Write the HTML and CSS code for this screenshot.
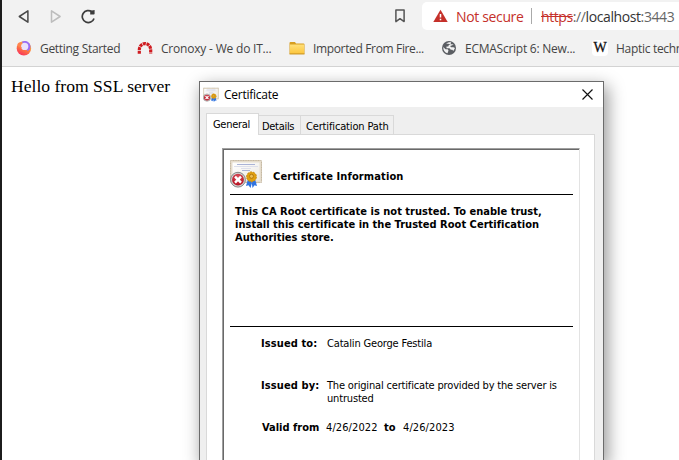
FILE: index.html
```
<!DOCTYPE html>
<html lang="en">
<head>
<meta charset="utf-8">
<title>localhost:3443</title>
<link rel="stylesheet" href="styles.css">
</head>
<body>
<svg width="0" height="0" class="defs" aria-hidden="true">
  <defs>
    <linearGradient id="flame" x1="0.8" y1="0" x2="0.3" y2="1"><stop offset="0" stop-color="#ffd43c"/><stop offset=".45" stop-color="#ff8a3a"/><stop offset="1" stop-color="#f8305f"/></linearGradient>
    <linearGradient id="gold" x1="0" y1="0" x2="0" y2="1"><stop offset="0" stop-color="#ffe07a"/><stop offset="1" stop-color="#fcc63e"/></linearGradient>
    <linearGradient id="paper" x1="0" y1="0" x2="1" y2="1"><stop offset="0" stop-color="#fff"/><stop offset="1" stop-color="#ece9e3"/></linearGradient>
    <radialGradient id="red" cx=".5" cy=".3" r=".7"><stop offset="0" stop-color="#dc5560"/><stop offset="1" stop-color="#b30d1d"/></radialGradient>
    <symbol id="cert" viewBox="0 0 32 28">
      <rect x=".5" y=".5" width="31" height="22" rx="1" fill="#e6ddcd" stroke="#d3c8b5"/>
      <rect x="2.5" y="2.5" width="27" height="18" fill="url(#paper)"/>
      <path d="M.5.5h31v22H.5z" fill="none" stroke="#b9ab92" stroke-dasharray="1 1.5" opacity=".6"/>
      <path d="M7 4.500h18M12 10.500h8" stroke="#aab3d6" stroke-width="1"/>
      <path d="M4 6.500h24M11 8.500h10" stroke="#dddfeb" stroke-width="1"/>
      <path d="M18 19l-2 7 2.500-.7L20.500 28l2-7zM25 19l2 7-2.500-.7L22.500 28l-1-7z" fill="#2f73e0"/>
      <circle cx="21.500" cy="16.800" r="4.900" fill="#e0a010" stroke="#c98a0c" stroke-width="1" stroke-dasharray="2 1"/>
      <circle cx="21.500" cy="16.300" r="2" fill="#edc052" stroke="#a86b05" stroke-width=".8"/>
      <circle cx="8" cy="19.700" r="7.400" fill="#d3d3d3" stroke="#868686" stroke-width="1"/>
      <circle cx="8" cy="19.700" r="5.900" fill="url(#red)"/>
      <path d="M5 16.700l6 6M11 16.700l-6 6" stroke="#fff" stroke-width="2.400"/>
    </symbol>
  </defs>
</svg>
<div class="browser">
  <div class="toolbar">
    <svg class="nav back" width="12" height="15" viewBox="0 0 12 15"><path d="M9.900 1.800v11.400L1.300 7.500z" fill="none" stroke="#484848" stroke-width="1.500" stroke-linejoin="round"/></svg>
    <svg class="nav forward" width="12" height="15" viewBox="0 0 12 15"><path d="M1.500 1.800v11.400L10.100 7.500z" fill="none" stroke="#bdbdbd" stroke-width="1.500" stroke-linejoin="round"/></svg>
    <svg class="nav reload" width="15" height="15" viewBox="0 0 15 15"><path d="M13 9.400A6 6 0 1 1 11 2.900" fill="none" stroke="#3c3c3c" stroke-width="1.700"/><path d="M9.200 1.800L13.600 1v3.800q0 .8-.8.800H9.200z" fill="#3c3c3c"/></svg>
    <svg class="bookmark" width="10" height="14" viewBox="0 0 10 14"><path d="M.9.900h8.200v11.700L5 9.700.9 12.600z" fill="none" stroke="#555" stroke-width="1.500" stroke-linejoin="round"/></svg>
    <div class="address">
      <svg class="warning" width="15" height="14" viewBox="0 0 15 14"><path d="M7.500.7L14.700 13H.3z" fill="#c5302a"/><path d="M7.500 5v3.600M7.500 9.700v1.600" stroke="#fff" stroke-width="1.500"/></svg>
      <span class="insecure">Not secure</span>
      <span class="divider"></span>
      <span class="url"><s>https</s><i>://</i>localhost<i>:3443</i></span>
    </div>
  </div>
  <div class="bookmarks">
    <div class="link"><svg width="16" height="16" viewBox="0 0 16 16"><circle cx="7.900" cy="8.400" r="7.200" fill="url(#flame)"/><path d="M5.800 1.800C9-.4 15.200 2 14.400 7.600c-.3 2-1.500 3-3 3.500z" fill="#9a6cf5"/><circle cx="8.700" cy="6.400" r="3.600" fill="#e9e2fb"/><path d="M1.300 4.500C3 1.800 4.500 1.800 6.300 3.300c-1.900.8-2 3.300-.2 5C4 8 2 6.500 1.300 4.500z" fill="#ff8550"/></svg><span class="b1">Getting Started</span></div>
    <div class="link"><svg width="16" height="16" viewBox="0 0 16 16"><path d="M2.300 13.800V10C2.500 1.500 13.500 1.500 13.700 10v3.800" fill="none" stroke="#cf1b20" stroke-width="3.200" stroke-dasharray="3 .7"/></svg><span class="b2">Cronoxy - We do IT...</span></div>
    <div class="link"><svg width="16" height="16" viewBox="0 0 16 16"><path d="M.5 14V3q0-1 1-1H6l1 1.500h7.500q1 0 1 1V14z" fill="#d79e20"/><path d="M1 13.500v-9h14v9z" fill="url(#gold)"/><path d="M.5 14h15" stroke="#cf9c2e"/></svg><span class="b3">Imported From Fire...</span></div>
    <div class="link"><svg width="16" height="16" viewBox="0 0 16 16"><circle cx="8" cy="8" r="7" fill="#5b5e63"/><path d="M2.300 7l2.200 2.200h2.200l.8 1.300-1 2.800C3.800 12.500 2 10 2.300 7zM5 3.500L8 2.300h2.200L9.500 4.200 7.800 5l-.5 1.600H5.500v1.600h3l1.300 1.600h1.500l1 1.300 1.700-3-1.600-.8H10L9.200 6l2-.8 1.500-.7" fill="#f2f2f2"/></svg><span class="b4">ECMAScript 6: New...</span></div>
    <div class="link"><span class="wiki">W</span><span class="b5">Haptic technology</span></div>
  </div>
  <main>Hello from SSL server</main>
</div>

<section class="dialog">
  <header>
    <svg width="16" height="16" viewBox="0 0 32 32"><use href="#cert" width="32" height="31"/></svg>
    <span class="title">Certificate</span>
    <svg class="close" width="11" height="11" viewBox="0 0 11 11"><path d="M.5.500l10 10M10.500.500l-10 10" stroke="#111" stroke-width="1.150"/></svg>
  </header>
  <nav class="tabs">
    <span class="tab active">General</span><span class="tab details">Details</span><span class="tab path">Certification Path</span>
  </nav>
  <div class="panel">
    <div class="sheet">
      <div class="heading"><svg width="32" height="28"><use href="#cert"/></svg><strong>Certificate Information</strong></div>
      <p class="notice">This CA Root certificate is not trusted. To enable trust,<br>install this certificate in the Trusted Root Certification<br>Authorities store.</p>
      <dl>
        <dt>Issued to:</dt><dd>Catalin George Festila</dd>
        <dt>Issued by:</dt><dd>The original certificate provided by the server is<br>untrusted</dd>
      </dl>
      <div class="valid"><b>Valid from</b><span>4/26/2022</span><b>to</b><span>4/26/2023</span></div>
    </div>
  </div>
</section>
</body>
</html>
```
FILE: styles.css
```
* { box-sizing: border-box; }
body { margin: 0; width: 679px; height: 460px; overflow: hidden; position: relative; background: #fff; font-family: "Open Sans", sans-serif; }
.defs { position: absolute; }
svg { display: block; flex: none; }
.browser { height: 460px; border-left: 2px solid #1c1c1c; }
.toolbar { height: 32px; background: #f2f2f2; display: flex; align-items: center; padding-left: 16px; }
.forward { margin-left: 20px; }
.reload { margin-left: 19px; }
.bookmark { margin-left: 299px; }
.address { align-self: flex-start; margin: 2px 0 0 17px; height: 28px; flex: 1; background: #fff; border-radius: 5px 0 0 5px; display: flex; align-items: center; padding-left: 11px; white-space: nowrap; font-size: 14px; }
.insecure { color: #c5302a; margin-left: 8px; width: 75px; letter-spacing: -.35px; }
.divider { width: 1px; height: 16px; background: #aaa; margin-right: 9px; }
.url { color: #333; letter-spacing: -.4px; }
.url i { font-style: normal; color: #666; }
.url s { color: #c5302a; }
.bookmarks { height: 35px; background: #f2f2f2; border-bottom: 1px solid #d3d3d3; display: flex; align-items: center; overflow: hidden; padding: 0 0 2px 14px; font-size: 12px; color: #444; white-space: nowrap; }
.link { display: flex; align-items: center; gap: 8px; flex: none; width: 121px; }
.link + .link { width: 152px; }
.link span { letter-spacing: -.3px; }
.link .b2 { letter-spacing: -.2px; }
.link .b3 { letter-spacing: -.35px; }
.link .b4 { letter-spacing: -.25px; }
.link:last-child { margin-left: -1px; }
.link .wiki { width: 16px; height: 16px; border-radius: 4px; background: #fff; color: #111; font: 14px/16px "Liberation Serif", serif; -webkit-text-stroke: .3px #111; text-align: center; }
main { padding: 9px 0 0 9px; font: 17.6px/21px "Liberation Serif", serif; color: #000; }

.dialog { position: absolute; left: 199px; top: 81px; width: 405px; height: 379px; border: 1px solid #6b6b6b; border-bottom: 0; overflow: hidden; background: #efefef; box-shadow: 3px 6px 16px 1px rgba(0,0,0,.4); font-family: "DejaVu Sans Condensed", "DejaVu Sans", sans-serif; font-stretch: condensed; font-size: 11px; line-height: 13px; color: #000; }
header { height: 25px; background: #fff; display: flex; align-items: center; padding: 0 10px 0 3px; }
.title { margin-left: 5px; font: 12px/16px "Open Sans", sans-serif; letter-spacing: -.25px; }
.close { margin-left: auto; }
.tabs { display: flex; align-items: flex-end; height: 27px; padding-left: 6px; position: relative; z-index: 1; }
.tab { height: 19px; border: 1px solid #d9d9d9; border-left: 0; border-bottom: 0; padding: 4px 0 0 3px; white-space: nowrap; letter-spacing: -.3px; }
.tab.active { width: 53px; height: 22px; background: #fff; border-left: 1px solid #d9d9d9; padding-left: 6px; margin-bottom: -1px; }
.details { width: 42px; }
.path { width: 93px; padding-left: 5px; letter-spacing: -.15px; }
.panel { margin: 0 8px 0 6px; height: 326px; border: 1px solid #d9d9d9; border-bottom: 0; background: #fff; padding: 13px 14px 0 15px; }
.sheet { height: 312px; border: 1px solid #a0a0a0; border-right-color: #e3e3e3; border-bottom: 0; padding: 0 6px 0 7px; box-shadow: inset 1px 1px #696969; }
.heading { height: 46px; border-bottom: 1px solid #000; display: flex; padding-top: 11px; }
.heading strong { margin: 10px 0 0 11px; letter-spacing: .12px; }
.notice { margin: 0; height: 132px; padding: 10px 0 0 5px; border-bottom: 1px solid #000; font-weight: bold; white-space: nowrap; letter-spacing: .02px; }
dl { display: grid; grid-template: 42px 42px / 66px 1fr; margin: 10px 0 0 31px; }
dt, .valid b { font-weight: bold; white-space: nowrap; }
dt { letter-spacing: .1px; }
dd { margin: 0; white-space: nowrap; letter-spacing: -.17px; }
.valid { display: flex; padding-left: 32px; white-space: nowrap; }
.valid b:first-child { width: 64px; }
.valid span { width: 58px; letter-spacing: .1px; }
.valid b + span + b { width: 19px; }
```
